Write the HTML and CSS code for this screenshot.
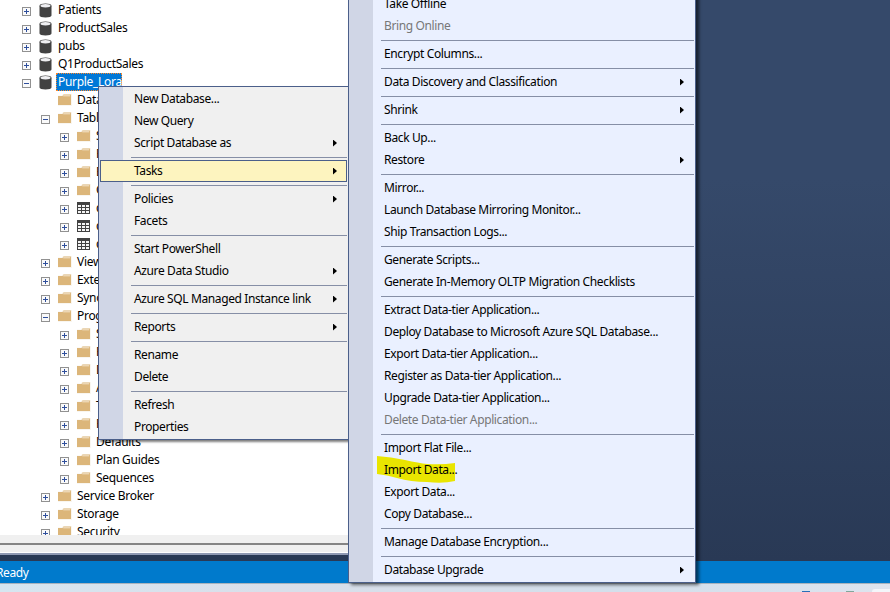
FILE: index.html
```
<!DOCTYPE html>
<html lang="en">
<head>
<meta charset="utf-8">
<title>Object Explorer</title>
<link rel="stylesheet" href="styles.css">
</head>
<body>
<svg class="defs" width="0" height="0">
  <symbol id="plus" viewBox="0 0 9 9"><rect x=".5" y=".5" width="8" height="8" fill="#fafafa" stroke="#919191"/><path d="M2 4.5h5M4.5 2v5" stroke="#2f4f9c"/></symbol>
  <symbol id="minus" viewBox="0 0 9 9"><rect x=".5" y=".5" width="8" height="8" fill="#fafafa" stroke="#919191"/><path d="M2 4.5h5" stroke="#2f4f9c"/></symbol>
  <symbol id="db" viewBox="0 0 13 15"><path d="M.5 3v9.5c0 1.2 2.5 2 6 2s6-.8 6-2V3z" fill="#424242"/><ellipse cx="6.5" cy="2.8" rx="6" ry="2.4" fill="#424242"/><ellipse cx="6.5" cy="2.8" rx="5" ry="1.7" fill="#efeff2"/></symbol>
  <symbol id="folder" viewBox="0 0 14 12"><path d="M0 12V1.5h4L5 0h9v12z" fill="#f9f6f0"/><path d="M0 2h4.5L5.5.5H13V11H0z" fill="#dcb67a"/><path d="M5.2 1.8h7" stroke="#f6ead6" stroke-width=".9"/></symbol>
  <symbol id="table" viewBox="0 0 13 12"><path d="M0 0h13v12H0z" fill="#424242"/><path d="M1 3h3v2H1zM5 3h3v2H5zM9 3h3v2H9zM1 6h3v2H1zM5 6h3v2H5zM9 6h3v2H9zM1 9h3v2H1zM5 9h3v2H5zM9 9h3v2H9z" fill="#f5f5f5"/></symbol>
</svg>
<div class="app">
  <div class="main">
    <div class="explorer">
      <div class="tree">
        <div class="row"><svg class="exp"><use href="#plus"/></svg><svg class="db"><use href="#db"/></svg><span>Patients</span></div>
        <div class="row"><svg class="exp"><use href="#plus"/></svg><svg class="db"><use href="#db"/></svg><span>ProductSales</span></div>
        <div class="row"><svg class="exp"><use href="#plus"/></svg><svg class="db"><use href="#db"/></svg><span>pubs</span></div>
        <div class="row"><svg class="exp"><use href="#plus"/></svg><svg class="db"><use href="#db"/></svg><span>Q1ProductSales</span></div>
        <div class="row"><svg class="exp"><use href="#minus"/></svg><svg class="db"><use href="#db"/></svg><span class="selected">Purple_Lora</span></div>
        <div class="row l2"><svg class="exp"></svg><svg class="folder"><use href="#folder"/></svg><span>Data</span></div>
        <div class="row l2"><svg class="exp"><use href="#minus"/></svg><svg class="folder"><use href="#folder"/></svg><span>Tables</span></div>
        <div class="row l3"><svg class="exp"><use href="#plus"/></svg><svg class="folder"><use href="#folder"/></svg><span>S</span></div>
        <div class="row l3"><svg class="exp"><use href="#plus"/></svg><svg class="folder"><use href="#folder"/></svg><span>F</span></div>
        <div class="row l3"><svg class="exp"><use href="#plus"/></svg><svg class="folder"><use href="#folder"/></svg><span>E</span></div>
        <div class="row l3"><svg class="exp"><use href="#plus"/></svg><svg class="folder"><use href="#folder"/></svg><span>G</span></div>
        <div class="row l3"><svg class="exp"><use href="#plus"/></svg><svg class="table"><use href="#table"/></svg><span>d</span></div>
        <div class="row l3"><svg class="exp"><use href="#plus"/></svg><svg class="table"><use href="#table"/></svg><span>d</span></div>
        <div class="row l3"><svg class="exp"><use href="#plus"/></svg><svg class="table"><use href="#table"/></svg><span>d</span></div>
        <div class="row l2"><svg class="exp"><use href="#plus"/></svg><svg class="folder"><use href="#folder"/></svg><span>Views</span></div>
        <div class="row l2"><svg class="exp"><use href="#plus"/></svg><svg class="folder"><use href="#folder"/></svg><span>Exter</span></div>
        <div class="row l2"><svg class="exp"><use href="#plus"/></svg><svg class="folder"><use href="#folder"/></svg><span>Syno</span></div>
        <div class="row l2"><svg class="exp"><use href="#minus"/></svg><svg class="folder"><use href="#folder"/></svg><span>Prog</span></div>
        <div class="row l3"><svg class="exp"><use href="#plus"/></svg><svg class="folder"><use href="#folder"/></svg><span>S</span></div>
        <div class="row l3"><svg class="exp"><use href="#plus"/></svg><svg class="folder"><use href="#folder"/></svg><span>F</span></div>
        <div class="row l3"><svg class="exp"><use href="#plus"/></svg><svg class="folder"><use href="#folder"/></svg><span>D</span></div>
        <div class="row l3"><svg class="exp"><use href="#plus"/></svg><svg class="folder"><use href="#folder"/></svg><span>A</span></div>
        <div class="row l3"><svg class="exp"><use href="#plus"/></svg><svg class="folder"><use href="#folder"/></svg><span>T</span></div>
        <div class="row l3"><svg class="exp"><use href="#plus"/></svg><svg class="folder"><use href="#folder"/></svg><span>R</span></div>
        <div class="row l3"><svg class="exp"><use href="#plus"/></svg><svg class="folder"><use href="#folder"/></svg><span>Defaults</span></div>
        <div class="row l3"><svg class="exp"><use href="#plus"/></svg><svg class="folder"><use href="#folder"/></svg><span>Plan Guides</span></div>
        <div class="row l3"><svg class="exp"><use href="#plus"/></svg><svg class="folder"><use href="#folder"/></svg><span>Sequences</span></div>
        <div class="row l2"><svg class="exp"><use href="#plus"/></svg><svg class="folder"><use href="#folder"/></svg><span>Service Broker</span></div>
        <div class="row l2"><svg class="exp"><use href="#plus"/></svg><svg class="folder"><use href="#folder"/></svg><span>Storage</span></div>
        <div class="row l2"><svg class="exp"><use href="#plus"/></svg><svg class="folder"><use href="#folder"/></svg><span>Security</span></div>
      </div>
      <div class="pane-foot"></div>
      <div class="pane-tabs"></div>
    </div>
  </div>
  <div class="status"><span>Ready</span></div>
  <div class="taskbar"><i class="task blue"></i><i class="task green"></i><i class="task-active"></i></div>
</div>

<div class="menu context">
  <div class="item">New Database...</div>
  <div class="item">New Query</div>
  <div class="item sub">Script Database as</div>
  <hr>
  <div class="item sub hot">Tasks</div>
  <hr>
  <div class="item sub">Policies</div>
  <div class="item">Facets</div>
  <hr>
  <div class="item">Start PowerShell</div>
  <div class="item sub">Azure Data Studio</div>
  <hr>
  <div class="item sub">Azure SQL Managed Instance link</div>
  <hr>
  <div class="item sub">Reports</div>
  <hr>
  <div class="item">Rename</div>
  <div class="item">Delete</div>
  <hr>
  <div class="item">Refresh</div>
  <div class="item">Properties</div>
</div>

<div class="menu tasks">
  <div class="item">Take Offline</div>
  <div class="item off">Bring Online</div>
  <hr>
  <div class="item">Encrypt Columns...</div>
  <hr>
  <div class="item sub">Data Discovery and Classification</div>
  <hr>
  <div class="item sub">Shrink</div>
  <hr>
  <div class="item">Back Up...</div>
  <div class="item sub">Restore</div>
  <hr>
  <div class="item">Mirror...</div>
  <div class="item">Launch Database Mirroring Monitor...</div>
  <div class="item">Ship Transaction Logs...</div>
  <hr>
  <div class="item">Generate Scripts...</div>
  <div class="item">Generate In-Memory OLTP Migration Checklists</div>
  <hr>
  <div class="item">Extract Data-tier Application...</div>
  <div class="item">Deploy Database to Microsoft Azure SQL Database...</div>
  <div class="item">Export Data-tier Application...</div>
  <div class="item">Register as Data-tier Application...</div>
  <div class="item">Upgrade Data-tier Application...</div>
  <div class="item off">Delete Data-tier Application...</div>
  <hr>
  <div class="item">Import Flat File...</div>
  <div class="item marked"><svg class="marker" viewBox="0 0 79 28"><path d="M0 0Q14 1 28 4T50 8Q65 9 78 7V25Q66 28 50 26Q34 26 20 22Q10 19 0 18z" fill="#e9e500"/></svg><span>Import Data...</span></div>
  <div class="item">Export Data...</div>
  <div class="item">Copy Database...</div>
  <hr>
  <div class="item">Manage Database Encryption...</div>
  <hr>
  <div class="item sub">Database Upgrade</div>
</div>
</body>
</html>
```
FILE: styles.css
```
* { box-sizing: border-box; }
body { margin: 0; width: 890px; height: 592px; overflow: hidden; position: relative;
  font: 12px/18px "Noto Sans", "Open Sans", sans-serif; letter-spacing: -0.38px; color: #000; }
.defs { position: absolute; }
.app { display: flex; flex-direction: column; height: 592px; }
.main { height: 561px; flex: none; background: linear-gradient(#35496a 0, #35496a 32%, #293955 100%); }
.explorer { width: 360px; height: 555px; background: #fff; display: flex; flex-direction: column; border-bottom: 2px solid #8f99b3; box-shadow: 0 6px #293955; }
.tree { height: 535px; padding-top: 1px; overflow: hidden; }
.row { height: 18px; display: flex; align-items: flex-start; padding-left: 22px; white-space: nowrap; letter-spacing: -0.3px; }
.l2 { padding-left: 41px; }
.l3 { padding-left: 60px; }
.row svg { flex: none; }
.exp { width: 9px; height: 9px; margin: 6px 8px 0 0; }
.db { width: 13px; height: 15px; margin: 2px 6px 0 0; }
.folder { width: 14px; height: 12px; margin: 3px 5px 0 0; }
.table { width: 13px; height: 12px; margin: 3px 6px 0 0; }
.selected { background: #0078d7; color: #fff; height: 18px; margin-left: -2px; padding: 0 1px; border: 1px dotted #ff8728; line-height: 16px; width: 66px; }
.pane-foot { height: 10px; background: #f0f0f0; border-bottom: 2px solid #858585; }
.pane-tabs { height: 7px; background: #f0f0f0; }
.status { height: 23px; flex: none; background: #007acc; color: #fff; line-height: 24px; border-bottom: 1px solid #a9b3bd; }
.status span { margin-left: -4px; }
.taskbar { height: 8px; background: linear-gradient(90deg, #d6e6f0, #d9dfea 30%, #d3dfeb 70%, #dde4ee); display: flex; align-items: flex-end; overflow: hidden; }
.task { width: 8px; height: 1px; margin-left: 802px; flex: none; background: #276fb8; }
.green { margin-left: 36px; background: #81a79c; }
.task-active { width: 30px; height: 3px; margin-left: 18px; flex: none; background: #f3f6fa; border-radius: 4px 0 0; }
.menu { position: absolute; border: 1px solid #4b5f8a; padding: 1px; white-space: nowrap; }
.context { left: 98px; top: 86px; width: 260px; background: linear-gradient(90deg, #d0d6e6 24px, #f0f0f0 24px); box-shadow: 2px 2px 2px rgba(0,0,0,.5); }
.context .item { width: 247px; }
.context hr { width: 216px; }
.tasks { left: 348px; bottom: 9px; width: 348px; background: linear-gradient(90deg, #d0d6e6 24px, #eaf0ff 24px); box-shadow: 3px 2px 3px rgba(0,0,0,.55); }
.item { height: 22px; line-height: 22px; padding-left: 34px; position: relative; }
.off { color: #777; }
.menu hr { height: 1px; border: 0; margin: 3px 0 2px 31px; background: #868fa6; }
.sub { display: flex; align-items: center; justify-content: space-between; padding-right: 10px; }
.sub::after { content: ""; width: 4px; height: 7px; background: #000; clip-path: polygon(0 0, 100% 50%, 0 100%); }
.hot { background: #fdf4bf; border: 1px solid #4b5f8a; padding-left: 33px; padding-right: 9px; line-height: 20px; }
.marker { position: absolute; left: 27px; top: -3px; width: 79px; height: 28px; }
.marked span { position: relative; }
```
